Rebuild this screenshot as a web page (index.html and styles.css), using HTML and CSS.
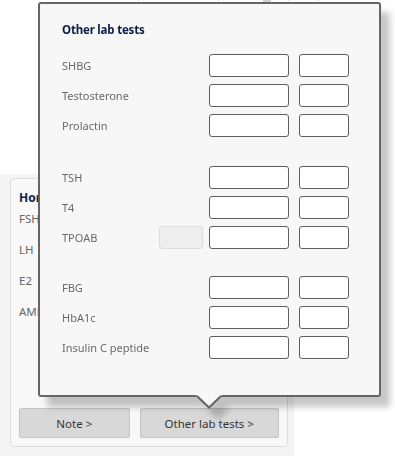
FILE: index.html
```html
<!DOCTYPE html>
<html>
<head>
<meta charset="utf-8">
<link rel="stylesheet" href="styles.css">
</head>
<body>
<div class="page">
  <div class="toprow">
    <div class="cell c1">Male 18/12</div>
    <div class="cell c2">18/12/2018</div>
    <div class="cell c3"><span class="bad">Bad</span><span class="dd"></span></div>
    <div class="cell c4"></div>
    <div class="cell c5"></div>
  </div>
  <div class="upper"></div>
  <div class="lower">
    <div class="card">
      <div class="card-title">Hormones</div>
      <div class="card-item card-item-first">FSH</div>
      <div class="card-item">LH</div>
      <div class="card-item">E2</div>
      <div class="card-item">AMH</div>
      <div class="card-buttons">
        <button class="btn btn-note">Note &gt;</button>
        <button class="btn btn-other">Other lab tests &gt;</button>
      </div>
    </div>
  </div>

  <div class="popover">
    <div class="pop-body">
      <div class="pop-title">Other lab tests</div>
      <div class="group">
        <div class="row"><span class="lbl">SHBG</span><span class="in big"></span><span class="in small"></span></div>
        <div class="row"><span class="lbl">Testosterone</span><span class="in big"></span><span class="in small"></span></div>
        <div class="row"><span class="lbl">Prolactin</span><span class="in big"></span><span class="in small"></span></div>
      </div>
      <div class="group group-2">
        <div class="row"><span class="lbl">TSH</span><span class="in big"></span><span class="in small"></span></div>
        <div class="row"><span class="lbl">T4</span><span class="in big"></span><span class="in small"></span></div>
        <div class="row"><span class="lbl">TPOAB</span><span class="tag"></span><span class="in big"></span><span class="in small"></span></div>
      </div>
      <div class="group group-3">
        <div class="row"><span class="lbl">FBG</span><span class="in big"></span><span class="in small"></span></div>
        <div class="row"><span class="lbl">HbA1c</span><span class="in big"></span><span class="in small"></span></div>
        <div class="row"><span class="lbl">Insulin C peptide</span><span class="in big"></span><span class="in small"></span></div>
      </div>
    </div>
    <svg class="arrow" width="26" height="14" viewBox="0 0 26 14">
      <polygon points="0,0 13,12.5 26,0" fill="#f7f7f7"/>
      <polyline points="1,1 13,12.5 25,1" fill="none" stroke="#666" stroke-width="2"/>
    </svg>
  </div>
</div>
</body>
</html>
```
FILE: styles.css
```css
html, body {
  margin: 0;
  padding: 0;
  background: #ffffff;
}
body {
  font-family: "Noto Sans", "Open Sans", sans-serif;
  font-size: 11px;
}
.page {
  position: relative;
  width: 395px;
  height: 456px;
  overflow: hidden;
}
.toprow {
  display: flex;
  height: 14px;
  margin-top: -10px;
  font-size: 11px;
  line-height: 12px;
}
.cell {
  box-sizing: border-box;
  border-right: 1px solid #e2e2e2;
  color: #333;
  white-space: nowrap;
  overflow: hidden;
}
.c1 { width: 139px; padding-left: 42px; color: #3a4a66; }
.c2 { width: 80px; padding-left: 8px; color: #7a3030; }
.c3 { width: 70px; padding-left: 7px; display: flex; gap: 16px; }
.bad { font-weight: bold; color: #222; }
.dd { width: 8px; height: 12px; background: #cfcfcf; }
.c4 { width: 30px; }
.c5 { flex: 1; border-right: none; }
.upper {
  height: 170px;
  width: 294px;
  background: #ffffff;
}
.lower {
  width: 294px;
  height: 300px;
  background: #f4f4f4;
  padding: 4px 6px 0 10px;
  box-sizing: border-box;
}
.card {
  box-sizing: border-box;
  width: 278px;
  height: 269px;
  background: #f8f8f8;
  border: 1px solid #dcdcdc;
  border-radius: 4px;
  padding: 11px 8px 0 8px;
  display: flex;
  flex-direction: column;
}
.card-title {
  font-weight: bold;
  color: #0b1f44;
  font-size: 12px;
  line-height: 16px;
  height: 16px;
}
.card-item {
  color: #666;
  font-size: 11.5px;
  line-height: 16px;
  margin-top: 15px;
}
.card-item-first { margin-top: 5px; }
.card-buttons {
  margin-top: auto;
  margin-bottom: 8px;
  display: flex;
  gap: 10px;
}
.btn {
  font-family: inherit;
  font-size: 11.5px;
  color: #333;
  background: #d8d8d8;
  border: 1px solid #c4c4c4;
  border-radius: 2px;
  height: 30px;
  padding: 0;
}
.btn-note { width: 111px; }
.btn-other { width: 140px; }

.popover {
  position: absolute;
  left: 38px;
  top: 2px;
  width: 343px;
  filter: drop-shadow(9px 10px 3px rgba(0, 0, 0, 0.22));
}
.pop-body {
  box-sizing: border-box;
  width: 343px;
  height: 395px;
  background: #f7f7f7;
  border: 2px solid #666;
  border-radius: 3px;
  padding: 17px 30px 0 22px;
}
.arrow {
  position: absolute;
  left: 158px;
  top: 393px;
  display: block;
}
.pop-title {
  font-weight: bold;
  color: #0b1f44;
  font-size: 11.5px;
  letter-spacing: -0.2px;
  line-height: 17px;
  height: 17px;
  margin-bottom: 16px;
}
.group {
  display: flex;
  flex-direction: column;
  gap: 7px;
}
.group-2 { margin-top: 29px; }
.group-3 { margin-top: 27px; }
.row {
  display: flex;
  align-items: center;
  height: 23px;
}
.lbl {
  flex: 1;
  color: #6a6a6a;
  font-size: 11px;
}
.in {
  box-sizing: border-box;
  height: 23px;
  background: #ffffff;
  border: 1px solid #5e5e5e;
  border-radius: 3px;
}
.big { width: 80px; margin-right: 10px; }
.small { width: 50px; }
.tag {
  box-sizing: border-box;
  width: 44px;
  height: 23px;
  margin-right: 6px;
  background: #eeeeee;
  border: 1px solid #dddddd;
  border-radius: 3px;
}
```
